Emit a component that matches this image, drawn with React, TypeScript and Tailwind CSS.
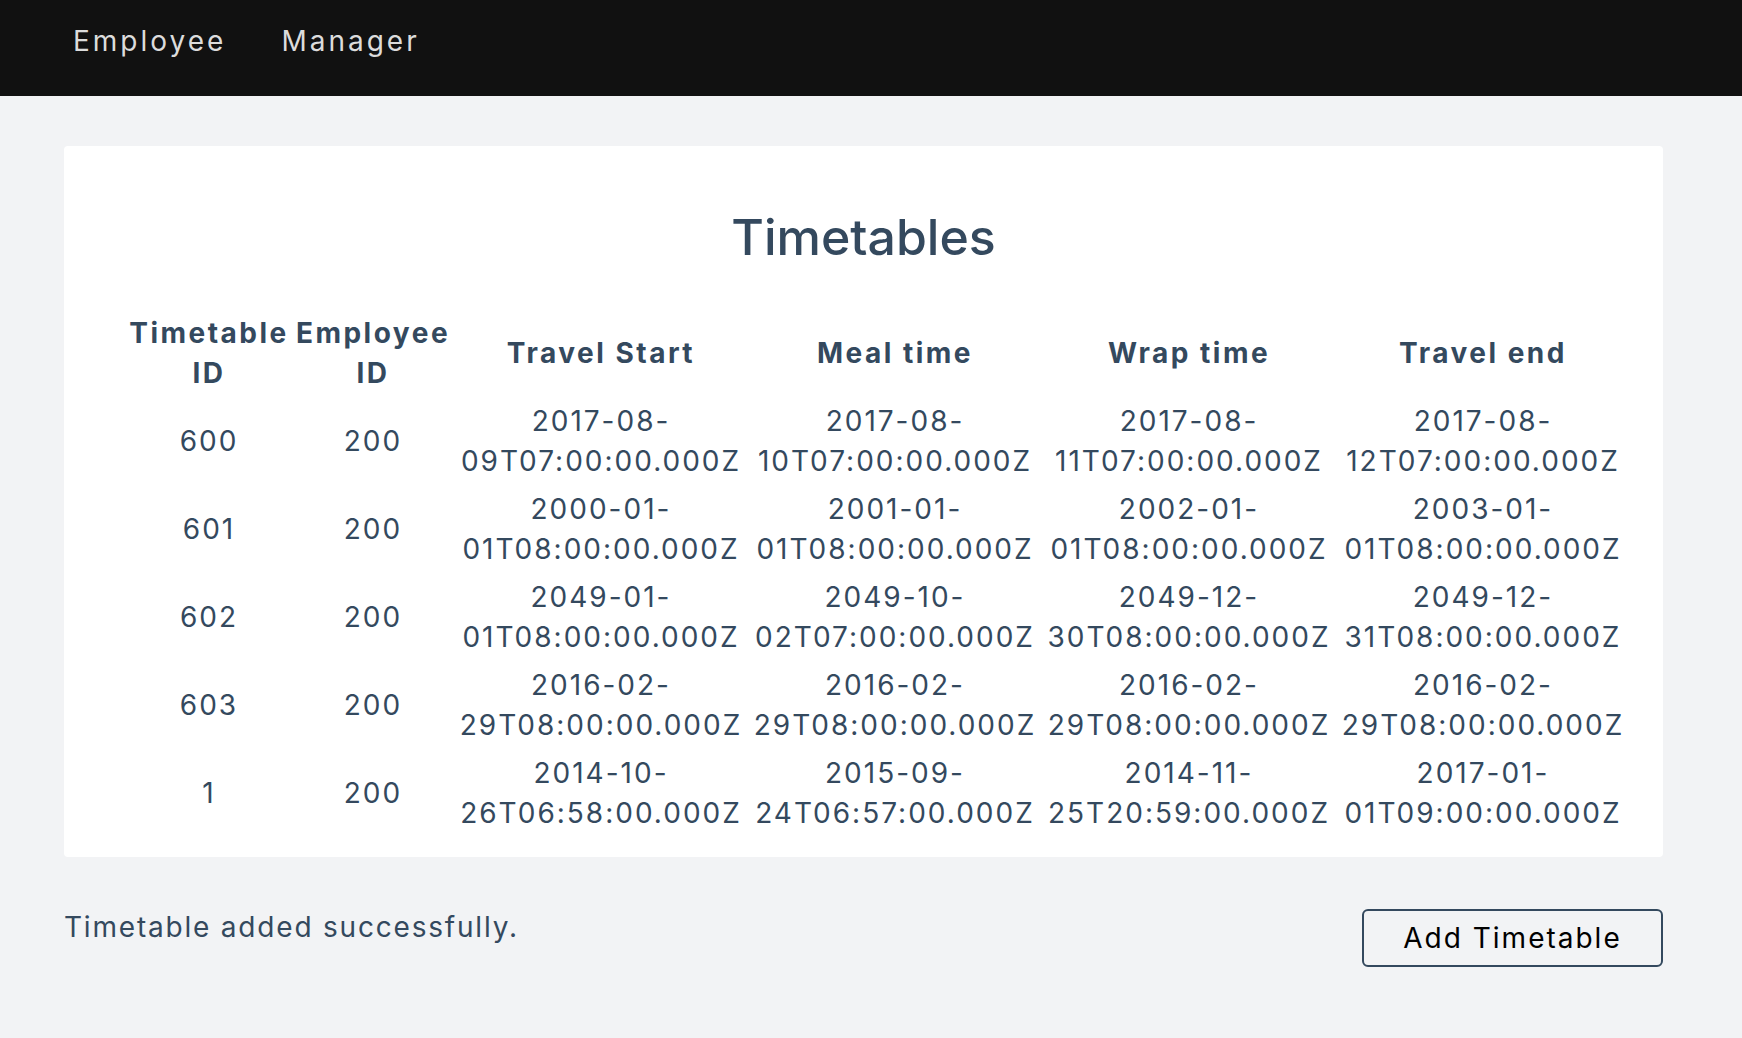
import React from "react"

const rows = [
  { id: "600", emp: "200", times: ["2017-08-09T07:00:00.000Z", "2017-08-10T07:00:00.000Z", "2017-08-11T07:00:00.000Z", "2017-08-12T07:00:00.000Z"] },
  { id: "601", emp: "200", times: ["2000-01-01T08:00:00.000Z", "2001-01-01T08:00:00.000Z", "2002-01-01T08:00:00.000Z", "2003-01-01T08:00:00.000Z"] },
  { id: "602", emp: "200", times: ["2049-01-01T08:00:00.000Z", "2049-10-02T07:00:00.000Z", "2049-12-30T08:00:00.000Z", "2049-12-31T08:00:00.000Z"] },
  { id: "603", emp: "200", times: ["2016-02-29T08:00:00.000Z", "2016-02-29T08:00:00.000Z", "2016-02-29T08:00:00.000Z", "2016-02-29T08:00:00.000Z"] },
  { id: "1", emp: "200", times: ["2014-10-26T06:58:00.000Z", "2015-09-24T06:57:00.000Z", "2014-11-25T20:59:00.000Z", "2017-01-01T09:00:00.000Z"] },
]

// splits an ISO date after the day-month dash, like the browser wrap in the picture
function DateCell({ value }: { value: string }) {
  const head = value.slice(0, 8)
  const tail = value.slice(8)
  return (
    <td className="py-1 text-center align-middle">
      <div>{head}</div>
      <div className="whitespace-nowrap">{tail}</div>
    </td>
  )
}

export default function App() {
  return (
    <div className="min-h-[1038px] bg-[#f2f3f5] font-['Inter',sans-serif] text-[#34495e]">
      <nav className="h-[96px] bg-[#111111] pt-[21px] pl-[73px]">
        <div className="flex gap-[55px] text-[28px] leading-[40px] tracking-[3px] text-[#dcdcdc]">
          <a>Employee</a>
          <a>Manager</a>
        </div>
      </nav>

      <main className="pl-[64px] pr-[79px] pt-[50px]">
        <div className="rounded-[4px] bg-white pt-[61px] pb-[20px]">
          <h1 className="text-center text-[50px] leading-[60px] font-medium">Timetables</h1>
          <table className="mt-[42px] ml-[62px] table-fixed border-collapse text-[28px] leading-[40px] tracking-[2px]">
            <colgroup>
              <col className="w-[166px]" />
              <col className="w-[162px]" />
              <col className="w-[294px]" />
              <col className="w-[294px]" />
              <col className="w-[294px]" />
              <col className="w-[294px]" />
            </colgroup>
            <thead>
              <tr className="font-bold tracking-[2.5px]">
                <th className="py-1">Timetable ID</th>
                <th className="py-1">Employee ID</th>
                <th className="py-1">Travel Start</th>
                <th className="py-1">Meal time</th>
                <th className="py-1">Wrap time</th>
                <th className="py-1">Travel end</th>
              </tr>
            </thead>
            <tbody>
              {rows.map((r) => (
                <tr key={r.id}>
                  <td className="py-1 text-center">{r.id}</td>
                  <td className="py-1 text-center">{r.emp}</td>
                  {r.times.map((t, i) => (
                    <DateCell key={i} value={t} />
                  ))}
                </tr>
              ))}
            </tbody>
          </table>
        </div>

        <div className="mt-[50px] flex items-start justify-between">
          <p className="text-[28px] leading-[40px] tracking-[1.8px]">Timetable added successfully.</p>
          <button className="mt-[2px] h-[58px] w-[301px] rounded-[6px] border-2 border-[#34495e] text-[28px] tracking-[2px] text-black">
            Add Timetable
          </button>
        </div>
      </main>
    </div>
  )
}
